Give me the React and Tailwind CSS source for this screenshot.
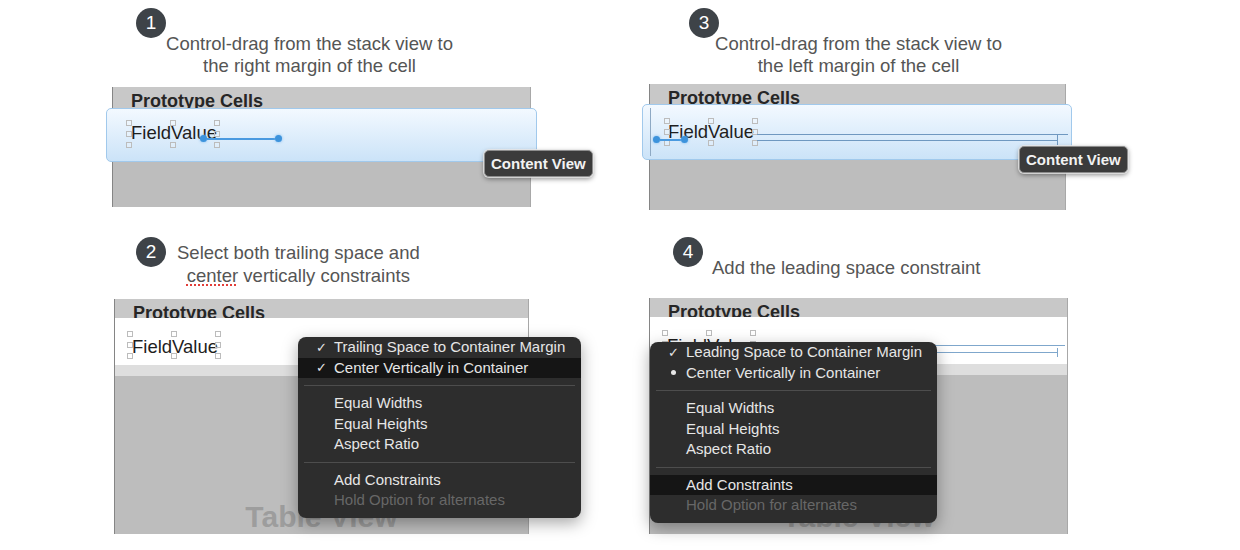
import React from "react";

function Badge({ n }) {
  return (
    <div className="w-[30px] h-[30px] shrink-0 rounded-full bg-[#3e4348] text-white text-[19px] leading-[30px] text-center">
      {n}
    </div>
  );
}

function Handles({ className }) {
  const cells = [1, 1, 1, 1, 0, 1, 1, 1, 1];
  return (
    <div className={`absolute grid grid-cols-[6px_6px_6px] gap-x-[38px] gap-y-[5px] ${className}`}>
      {cells.map((on, i) =>
        on ? (
          <span key={i} className="block w-[6px] h-[6px] border border-[#bcbcbc] bg-white/20" />
        ) : (
          <span key={i} className="block w-[6px] h-[6px]" />
        )
      )}
    </div>
  );
}

function Header({ className = "h-[19px]" }) {
  return (
    <div className={`${className} shrink-0 bg-[#c8c8c8] pl-[18px] pt-[5px] text-[18px] font-bold leading-[18px] text-[#262626] whitespace-nowrap`}>
      Prototype Cells
    </div>
  );
}

function FieldValue({ className }) {
  return (
    <div className={`absolute text-[18.5px] leading-[18px] text-[#1e1e1e] whitespace-nowrap ${className}`}>
      FieldValue
    </div>
  );
}

function Drag({ className }) {
  return (
    <div className={`absolute flex items-center ${className}`}>
      <span className="w-[7px] h-[7px] rounded-full bg-[#3d93dc] shadow-[0_0_3px_#7ab8ee]" />
      <span className="flex-1 h-[2px] bg-[#4a9ae0]" />
      <span className="w-[7px] h-[7px] rounded-full bg-[#3d93dc] shadow-[0_0_3px_#7ab8ee]" />
    </div>
  );
}

function Tooltip({ className }) {
  return (
    <div className={`absolute h-[27px] px-[6px] rounded-[5px] bg-[#3b3b3b] border border-[#8d8d8d] shadow-[0_0_0_1px_rgba(230,230,230,0.8),0_2px_5px_rgba(0,0,0,0.45)] text-[15px] font-bold leading-[25px] text-[#f2f2f2] whitespace-nowrap ${className}`}>
      Content View
    </div>
  );
}

function Menu({ className, first, second, highlight }) {
  const row = (text, i, mark, dim) => (
    <div
      key={i}
      className={`relative h-[20.5px] flex items-center pl-[36px] text-[15px] whitespace-nowrap ${
        highlight === i ? "bg-[#151515]" : ""
      } ${dim ? "text-[#676767]" : "text-[#e6e6e6]"}`}
    >
      {mark === "check" && (
        <span className="absolute left-[18px] text-[13px] font-['DejaVu_Sans',sans-serif] text-[#e6e6e6]">✓</span>
      )}
      {mark === "dot" && <span className="absolute left-[21px] w-[5px] h-[5px] rounded-full bg-[#e6e6e6]" />}
      {text}
    </div>
  );
  const sep = (k) => (
    <div key={k} className="h-[15px] flex items-center px-[6px]">
      <div className="h-px w-full bg-[#4d4d4d]" />
    </div>
  );
  return (
    <div className={`absolute rounded-[8px] bg-[#2d2d2d] overflow-hidden pb-[7px] shadow-[0_5px_16px_rgba(0,0,0,0.35)] ${className}`}>
      {row(first, 0, "check")}
      {row("Center Vertically in Container", 1, second)}
      {sep("a")}
      {row("Equal Widths", 2)}
      {row("Equal Heights", 3)}
      {row("Aspect Ratio", 4)}
      {sep("b")}
      {row("Add Constraints", 5)}
      {row("Hold Option for alternates", 6, null, true)}
    </div>
  );
}

function LowerScreen({ className, children }) {
  return (
    <div className={`relative flex flex-col border-l border-[#858585] border-r border-r-[#a8a8a8] ${className}`}>
      <Header />
      <div className="relative h-[47px] shrink-0 bg-white">
        <FieldValue className="left-[17px] top-[20px]" />
        <Handles className="left-[12px] top-[13px]" />
      </div>
      <div className="h-[11px] shrink-0 bg-[#dedede]" />
      <div className="flex-1 bg-[#bdbdbd] flex items-end justify-center pb-[2px]">
        <span className="text-[30px] font-bold leading-[30px] text-[#9d9d9d]">Table View</span>
      </div>
      {children}
    </div>
  );
}

export default function App() {
  return (
    <div className="w-[1240px] h-[550px] bg-white overflow-hidden flex pl-[112px] gap-[118px] font-['Liberation_Sans',Arial,sans-serif]">
      {/* left column */}
      <div className="w-[419px] flex flex-col">
        <div className="h-[237px] flex flex-col">
          <div className="h-[87px] flex flex-col">
            <div className="mt-[8px] ml-[24px]">
              <Badge n="1" />
            </div>
            <p className="mt-[-5px] pr-[24px] text-center text-[18.5px] leading-[22px] text-[#555] whitespace-nowrap">
              Control-drag from the stack view to
              <br />
              the right margin of the cell
            </p>
          </div>
          <div className="relative h-[120px] flex flex-col border-l border-[#858585] border-r border-r-[#a8a8a8]">
            <Header className="h-[21px]" />
            <div className="flex-1 bg-[#bdbdbd]" />
            <div className="absolute left-[-7px] right-[-7px] top-[21px] h-[54px] rounded-[5px] border border-[#a1c9ec] bg-linear-to-b from-[#f3f9ff] to-[#cbe3f8]">
              <FieldValue className="left-[24px] top-[15px]" />
              <Handles className="left-[19px] top-[11px]" />
              <Drag className="left-[93px] w-[82px] top-[26px] h-[7px]" />
            </div>
            <Tooltip className="left-[371px] top-[63px]" />
          </div>
        </div>

        <div className="flex flex-col">
          <div className="h-[62px] flex">
            <div className="ml-[24px]">
              <Badge n="2" />
            </div>
            <p className="ml-[11px] mt-[4px] text-center text-[18.5px] leading-[23px] text-[#555] whitespace-nowrap">
              Select both trailing space and
              <br />
              <span className="underline decoration-dotted decoration-[#e0302a] underline-offset-[3px]">center</span>{" "}
              vertically constraints
            </p>
          </div>
          <LowerScreen className="ml-[2px] w-[415px] h-[235px]">
            <Menu
              className="left-[183px] top-[38px] w-[283px]"
              first="Trailing Space to Container Margin"
              second="check"
              highlight={1}
            />
          </LowerScreen>
        </div>
      </div>

      {/* right column */}
      <div className="w-[419px] flex flex-col">
        <div className="h-[237px] flex flex-col">
          <div className="h-[84px] flex flex-col">
            <div className="mt-[8px] ml-[40px]">
              <Badge n="3" />
            </div>
            <p className="mt-[-5px] text-center text-[18.5px] leading-[22px] text-[#555] whitespace-nowrap">
              Control-drag from the stack view to
              <br />
              the left margin of the cell
            </p>
          </div>
          <div className="relative w-[417px] h-[126px] flex flex-col border-l border-[#858585] border-r border-r-[#a8a8a8]">
            <Header className="h-[20px]" />
            <div className="flex-1 bg-[#bdbdbd]" />
            <div className="absolute left-[-8px] right-[-7px] top-[20px] h-[56px] rounded-[5px] border border-[#a1c9ec] bg-linear-to-b from-[#f3f9ff] to-[#cbe3f8]">
              <span className="absolute left-[7px] top-[3px] bottom-[3px] w-px bg-[#8ea9c4]" />
              <FieldValue className="left-[25px] top-[18px]" />
              <Handles className="left-[21px] top-[13px]" />
              <span className="absolute left-[114px] w-[311px] top-[29px] h-px bg-[#6f98c0]" />
              <span className="absolute left-[114px] w-[300px] top-[35px] h-px bg-[#6f98c0]" />
              <span className="absolute left-[414px] top-[30px] h-[10px] w-px bg-[#6f98c0]" />
              <Drag className="left-[10px] w-[35px] top-[31px] h-[7px]" />
            </div>
            <Tooltip className="left-[369px] top-[62px]" />
          </div>
        </div>

        <div className="flex flex-col">
          <div className="h-[61px] flex">
            <div className="ml-[24px]">
              <Badge n="4" />
            </div>
            <p className="ml-[9px] mt-[20px] text-[18.5px] leading-[22px] text-[#555] whitespace-nowrap">
              Add the leading space constraint
            </p>
          </div>
          <LowerScreen className="w-[419px] h-[236px]">
            <span className="absolute left-[200px] right-[2px] top-[47px] h-px bg-[#7fa7cc]" />
            <span className="absolute left-[200px] w-[207px] top-[54px] h-px bg-[#7fa7cc]" />
            <span className="absolute left-[407px] top-[50px] h-[9px] w-px bg-[#7fa7cc]" />
            <Menu
              className="left-[0px] top-[44px] w-[287px]"
              first="Leading Space to Container Margin"
              second="dot"
              highlight={5}
            />
          </LowerScreen>
        </div>
      </div>
    </div>
  );
}
